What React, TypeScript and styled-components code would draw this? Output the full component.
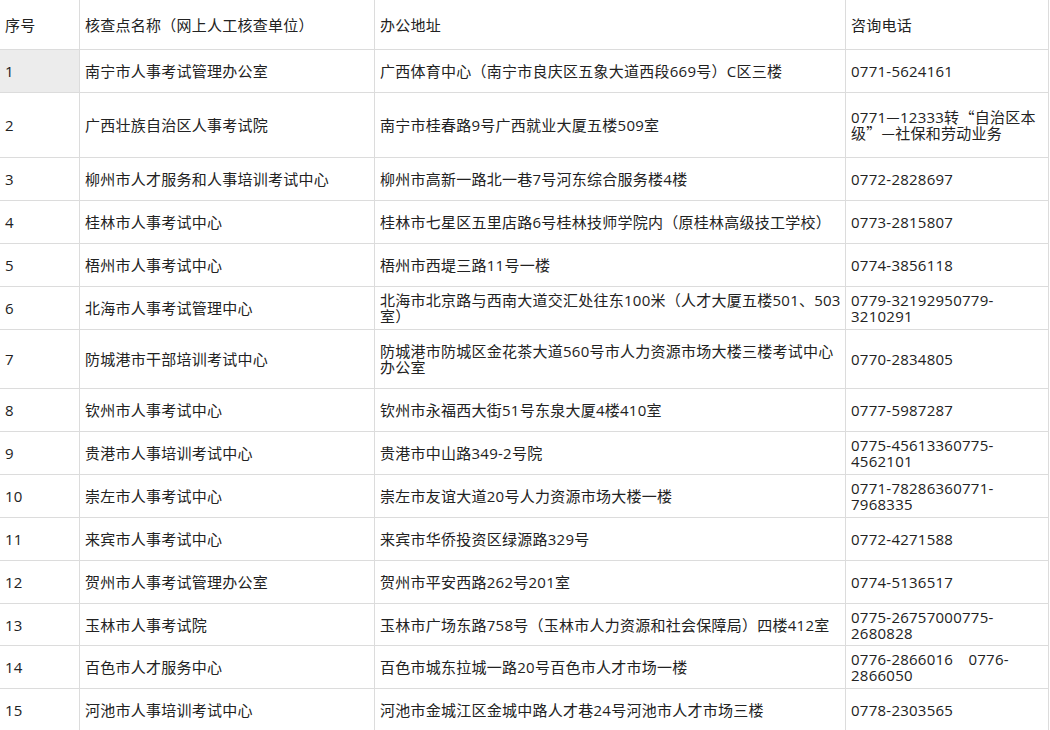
import React from "react";
import styled, { createGlobalStyle } from "styled-components";

const GlobalStyle = createGlobalStyle`
  html, body { margin: 0; padding: 0; background: #fff; }
  body { font-family: "Open Sans", "Noto Sans CJK SC", sans-serif; }
  *, *::before, *::after { box-sizing: border-box; }
`;

const Table = styled.div`
  display: flex;
  flex-direction: column;
  width: 1049px;
  color: #222;
  font-size: 15px;
  line-height: 16px;
  letter-spacing: 0.25px;
`;

const Row = styled.div<{ $h: number }>`
  display: grid;
  grid-template-columns: 80px 295px 471px 203px;
  height: ${(p) => p.$h}px;
`;

const Cell = styled.div<{ $shade?: boolean }>`
  display: flex;
  align-items: center;
  padding: 0 1px 0 5px;
  border-right: 1px solid #dcdcdc;
  border-bottom: 1px solid #dcdcdc;
  background: ${(p) => (p.$shade ? "#ececec" : "transparent")};
`;

const Text = styled.span`
  display: block;
`;

const Cjk = styled.span`
  font-family: "Noto Sans CJK SC", sans-serif;
`;

type Item = {
  no: string;
  name: string;
  addr: string;
  tel: React.ReactNode;
  h: number;
};

const rows: Item[] = [
  { no: "1", name: "南宁市人事考试管理办公室", addr: "广西体育中心（南宁市良庆区五象大道西段669号）C区三楼", tel: "0771-5624161", h: 43 },
  {
    no: "2",
    name: "广西壮族自治区人事考试院",
    addr: "南宁市桂春路9号广西就业大厦五楼509室",
    tel: (
      <>
        0771<Cjk>—</Cjk>12333转<Cjk>“</Cjk>自治区本级<Cjk>”—</Cjk>社保和劳动业务
      </>
    ),
    h: 65,
  },
  { no: "3", name: "柳州市人才服务和人事培训考试中心", addr: "柳州市高新一路北一巷7号河东综合服务楼4楼", tel: "0772-2828697", h: 43 },
  { no: "4", name: "桂林市人事考试中心", addr: "桂林市七星区五里店路6号桂林技师学院内（原桂林高级技工学校）", tel: "0773-2815807", h: 43 },
  { no: "5", name: "梧州市人事考试中心", addr: "梧州市西堤三路11号一楼", tel: "0774-3856118", h: 43 },
  {
    no: "6",
    name: "北海市人事考试管理中心",
    addr: "北海市北京路与西南大道交汇处往东100米（人才大厦五楼501、503室）",
    tel: (
      <>
        0779-32192950779-<wbr />3210291
      </>
    ),
    h: 43,
  },
  { no: "7", name: "防城港市干部培训考试中心", addr: "防城港市防城区金花茶大道560号市人力资源市场大楼三楼考试中心办公室", tel: "0770-2834805", h: 59 },
  { no: "8", name: "钦州市人事考试中心", addr: "钦州市永福西大街51号东泉大厦4楼410室", tel: "0777-5987287", h: 43 },
  {
    no: "9",
    name: "贵港市人事培训考试中心",
    addr: "贵港市中山路349-2号院",
    tel: (
      <>
        0775-45613360775-<wbr />4562101
      </>
    ),
    h: 43,
  },
  {
    no: "10",
    name: "崇左市人事考试中心",
    addr: "崇左市友谊大道20号人力资源市场大楼一楼",
    tel: (
      <>
        0771-78286360771-<wbr />7968335
      </>
    ),
    h: 43,
  },
  { no: "11", name: "来宾市人事考试中心", addr: "来宾市华侨投资区绿源路329号", tel: "0772-4271588", h: 43 },
  { no: "12", name: "贺州市人事考试管理办公室", addr: "贺州市平安西路262号201室", tel: "0774-5136517", h: 43 },
  {
    no: "13",
    name: "玉林市人事考试院",
    addr: "玉林市广场东路758号（玉林市人力资源和社会保障局）四楼412室",
    tel: (
      <>
        0775-26757000775-<wbr />2680828
      </>
    ),
    h: 42,
  },
  {
    no: "14",
    name: "百色市人才服务中心",
    addr: "百色市城东拉城一路20号百色市人才市场一楼",
    tel: (
      <>
        0776-2866016<Cjk>　</Cjk>0776-<wbr />2866050
      </>
    ),
    h: 43,
  },
  { no: "15", name: "河池市人事培训考试中心", addr: "河池市金城江区金城中路人才巷24号河池市人才市场三楼", tel: "0778-2303565", h: 43 },
];

export default function App() {
  return (
    <>
      <GlobalStyle />
      <Table>
        <Row $h={50}>
          <Cell><Text>序号</Text></Cell>
          <Cell><Text>核查点名称（网上人工核查单位）</Text></Cell>
          <Cell><Text>办公地址</Text></Cell>
          <Cell><Text>咨询电话</Text></Cell>
        </Row>
        {rows.map((r, i) => (
          <Row key={r.no} $h={r.h}>
            <Cell $shade={i === 0}><Text>{r.no}</Text></Cell>
            <Cell><Text>{r.name}</Text></Cell>
            <Cell><Text>{r.addr}</Text></Cell>
            <Cell><Text>{r.tel}</Text></Cell>
          </Row>
        ))}
      </Table>
    </>
  );
}
